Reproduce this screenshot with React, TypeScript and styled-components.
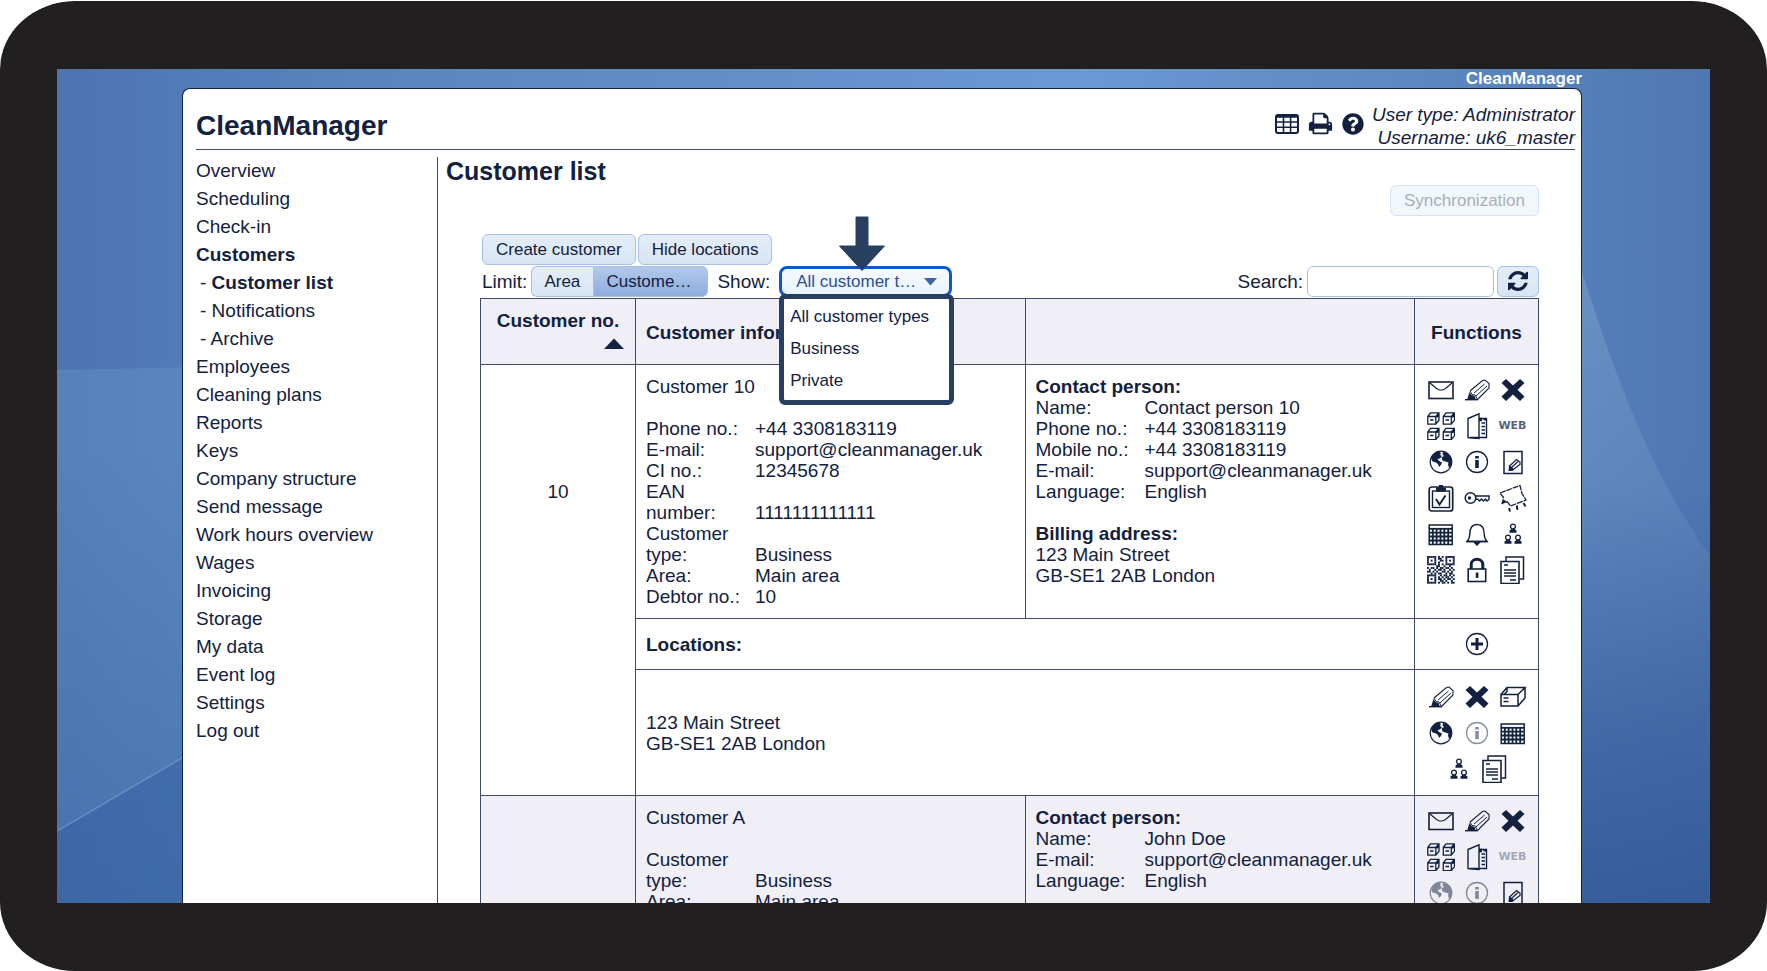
import React from 'react';
import styled, { createGlobalStyle } from 'styled-components';
import { FaQuestionCircle } from 'react-icons/fa';

const ink = '#12213f';
const line = '#3d4a68';
const callout = '#27405f';

const GlobalStyle = createGlobalStyle`
  *, *::before, *::after { box-sizing: border-box; }
  html, body { margin: 0; background: #fff; }
  body, button, input, select {
    font-family: 'Liberation Sans', Arial, Helvetica, sans-serif;
    color: ${ink};
  }
  body { font-size: 19px; line-height: 21px; }
  a { color: inherit; text-decoration: none; }
`;

/* ---------- device and wallpaper ---------- */

const Device = styled.div`
  height: 100vh;
  min-height: 480px;
  padding: 68px 57px;
  background: #221f20;
  background-clip: padding-box;
  border-top: 1px solid #fff;
  border-radius: 75px / 69px;
`;

const Screen = styled.div`
  position: relative;
  height: 100%;
  overflow: hidden;
  padding: 0 128px 0 125px;
  display: flex;
  flex-direction: column;
  background: linear-gradient(90deg, #4b74b1 0%, #5a84be 18%, #6b99d3 62%, #5a84be 86%, #4f78b3 100%);
`;

const Wallpaper = styled.svg`
  position: absolute;
  inset: 0;
  width: 100%;
  height: 100%;
`;

const Brand = styled.div`
  position: relative;
  text-align: right;
  font-size: 17px;
  line-height: 19px;
  font-weight: bold;
  color: #fff;
`;

const Panel = styled.div`
  position: relative;
  flex: 1 0 auto;
  display: flex;
  flex-direction: column;
  background: #fff;
  border: 1px solid ${ink};
  border-bottom: 0;
  border-radius: 8px 8px 0 0;
`;

/* ---------- header ---------- */

const Header = styled.header`
  display: flex;
  align-items: center;
  height: 61px;
  margin: 0 6px 0 13px;
  padding-top: 13px;
  border-bottom: 1px solid ${line};
`;

const AppName = styled.h1`
  margin: 0 auto 0 0;
  font-size: 28px;
  line-height: 32px;
`;

const HeaderTools = styled.div`
  display: flex;
  align-items: center;
  gap: 9px;
  margin-right: 8px;
  padding-bottom: 4px;
`;

const PlainButton = styled.button<{ $muted?: boolean }>`
  display: flex;
  align-items: center;
  justify-content: center;
  padding: 0;
  border: 0;
  background: none;
  cursor: pointer;
  opacity: ${(p) => (p.$muted ? 0.5 : 1)};
`;

const UserInfo = styled.div`
  font-style: italic;
  line-height: 23px;
  text-align: right;
`;

/* ---------- body ---------- */

const Body = styled.div`
  flex: 1;
  display: flex;
  padding-top: 7px;
`;

const Nav = styled.nav`
  flex: 0 0 254px;
  padding-left: 13px;
`;

const NavList = styled.ul`
  list-style: none;
  margin: 0;
  padding: 0;
`;

const NavItem = styled.li<{ $bold?: boolean; $sub?: boolean }>`
  line-height: 28px;
  padding-left: ${(p) => (p.$sub ? 4 : 0)}px;
  a { font-weight: ${(p) => (p.$bold ? 'bold' : 'normal')}; }
`;

const Main = styled.main`
  flex: 1;
  min-width: 0;
  border-left: 1px solid ${line};
  padding: 0 42px;
`;

const PageTitle = styled.h2`
  margin: 0 0 0 -34px;
  font-size: 25px;
  line-height: 28px;
`;

const Button = styled.button`
  height: 31px;
  padding: 0 13px;
  border: 1px solid #a5c0ea;
  border-radius: 6px;
  background: linear-gradient(#e4edf7, #d7e5f3);
  font-size: 17px;
  line-height: 20px;
  &:disabled {
    background: #f2f7fb;
    border-color: #d6e3f6;
    color: #a9afb9;
  }
`;

const SyncRow = styled.div`
  display: flex;
  justify-content: flex-end;
  margin-bottom: 18px;
`;

const ActionRow = styled.div`
  display: flex;
  gap: 2px;
  padding-left: 2px;
  margin-bottom: 1px;
`;

const FilterRow = styled.div`
  display: flex;
  align-items: center;
  padding-left: 2px;
  margin-bottom: 1px;
`;

const Segments = styled.div`
  display: flex;
  margin: 0 9px 0 4px;
`;

const Segment = styled(Button)<{ $active?: boolean }>`
  width: ${(p) => (p.$active ? 115 : 62)}px;
  padding-left: 12px;
  border-radius: ${(p) => (p.$active ? '0 6px 6px 0' : '6px 0 0 6px')};
  border-right-width: ${(p) => (p.$active ? 1 : 0)}px;
  background: ${(p) => (p.$active ? 'linear-gradient(#b3c9ea, #8dacde)' : 'linear-gradient(#e4edf7, #d7e5f3)')};
  text-align: left;
`;

const SelectBox = styled.div`
  position: relative;
  margin-left: 9px;
`;

const TypeSelect = styled.select`
  display: block;
  appearance: none;
  width: 173px;
  height: 31px;
  padding: 0 28px 0 14px;
  border: 3px solid #0c58cc;
  border-radius: 8px;
  background: linear-gradient(#f6faff, #e9f3fc);
  font-size: 17px;
  color: #2b4f91;
  outline: none;
`;

const Caret = styled.svg`
  position: absolute;
  right: 15px;
  top: 12px;
  pointer-events: none;
`;

const Pointer = styled.svg`
  position: absolute;
  left: 59px;
  top: -50px;
  z-index: 3;
`;

const Menu = styled.ul`
  position: absolute;
  left: 0;
  top: 28px;
  z-index: 2;
  width: 175px;
  margin: 0;
  padding: 2px 0 3px;
  list-style: none;
  background: #fff;
  border: 5px solid ${callout};
  border-radius: 6px;
`;

const MenuItem = styled.button`
  display: block;
  width: 100%;
  height: 32px;
  padding: 0 0 0 6px;
  border: 0;
  background: none;
  font-size: 17px;
  line-height: 20px;
  text-align: left;
`;

const SearchBox = styled.form`
  display: flex;
  align-items: center;
  margin-left: auto;
`;

const SearchInput = styled.input`
  width: 187px;
  height: 31px;
  margin: 0 3px 0 4px;
  padding: 0 8px;
  border: 1px solid #a5c0ea;
  border-radius: 6px;
  background: #fff;
  font-size: 17px;
`;

const RefreshButton = styled(Button)`
  width: 42px;
  padding: 0 0 2px;
  display: flex;
  align-items: center;
  justify-content: center;
`;

/* ---------- table ---------- */

const Table = styled.table`
  width: 100%;
  table-layout: fixed;
  border-collapse: collapse;
`;

const Col = styled.col<{ $w?: number }>`
  width: ${(p) => (p.$w ? `${p.$w}px` : 'auto')};
`;

const Th = styled.th<{ $center?: boolean }>`
  height: 66px;
  padding: 2px 10px 0;
  border: 1px solid ${line};
  background: #f0eff6;
  text-align: ${(p) => (p.$center ? 'center' : 'left')};
`;

const SortMark = styled.svg`
  display: block;
  margin: 7px 1px 6px auto;
`;

const Td = styled.td<{ $tint?: boolean; $open?: 'top' | 'bottom'; $middle?: boolean }>`
  padding: 11px 10px;
  border: 1px solid ${line};
  ${(p) => p.$open && `border-${p.$open}-style: hidden;`}
  background: ${(p) => (p.$tint ? '#f0eff6' : '#fff')};
  vertical-align: ${(p) => (p.$middle ? 'middle' : 'top')};
`;

const NumberTd = styled(Td)`
  text-align: center;
`;

const AddressTd = styled(Td)`
  height: 126px;
`;

const IconTd = styled(Td)`
  padding: 7px;
`;

const Icons = styled.div`
  display: flex;
  flex-wrap: wrap;
  justify-content: center;
`;

const IconButton = styled(PlainButton)`
  width: 36px;
  height: 36px;
`;

const WebLabel = styled.span`
  font-family: 'DejaVu Sans', sans-serif;
  font-size: 11px;
  line-height: 14px;
  font-weight: bold;
  color: #56637c;
`;

const Facts = styled.dl`
  display: grid;
  grid-template-columns: 97px 1fr;
  column-gap: 12px;
  align-items: end;
  margin: 0;
  dt, dd { margin: 0; }
`;

const Block = styled.div`
  margin-bottom: 21px;
`;

/* ---------- icons ---------- */

const Cube = ({ x, y }: { x: number; y: number }) => (
  <g transform={`translate(${x} ${y})`}>
    <path d="M.8 4.500h8v7.700h-8zM.8 4.500 3.500.8H12v7.400L8.800 12M8.800 4.500 12 .8M3 8h3.500" />
    <path d="M8.800 4.500 12 .8v4l-2 1z" fill={ink} stroke="none" />
  </g>
);

const Person = ({ x, y }: { x: number; y: number }) => (
  <g transform={`translate(${x} ${y})`}>
    <circle cx="0" cy="3" r="2.4" />
    <path d="M-3.5 9.300V7l2-1.500h3l2 1.500v2.300z" fill={ink} stroke="none" />
  </g>
);

const qrRows = [
  '111110101011111',
  '100010110010001',
  '101010011010101',
  '100010100010001',
  '111110101011111',
  '000001100100100',
  '101101011011010',
  '010010110100101',
  '110101001101010',
  '001010110010110',
  '111110010110101',
  '100010101011010',
  '101010110101101',
  '100010011010010',
  '111110101101011',
];

const glyphs: Record<string, React.ReactNode> = {
  mail: (
    <>
      <rect x="2" y="6" width="24" height="16.5" strokeWidth="1.6" />
      <path d="M3 7l6.500 5.500 3 1.500h3l3-1.500L25 7" strokeWidth="1.2" />
    </>
  ),
  edit: (
    <>
      <path d="M7 15 19.500 4.500 22 4l4 3.500v4.500L14.500 23.500" strokeWidth="1.1" />
      <path d="M11 17 21.500 8M13 20 24 10" strokeWidth="1" />
      <path d="M7 15l2 3.500 3 .5 2.500 4.500" strokeWidth="1" />
      <path d="M6.500 16 4 24h9l-1.500-4-3-1z" fill={ink} stroke="none" />
      <path d="M2 23.700h13" strokeWidth="1.4" />
    </>
  ),
  remove: (
    <path
      d="M7 3l7 6.500L21 3l4.500 4-7 6.700 7 6.800L21 25l-7-6.500L7 25l-4.500-4.500 7-6.800-7-6.700z"
      fill={ink}
      stroke="none"
    />
  ),
  cubes: (
    <>
      <Cube x={0} y={0} />
      <Cube x={15.5} y={0} />
      <Cube x={0} y={15.5} />
      <Cube x={15.5} y={15.5} />
    </>
  ),
  binder: (
    <>
      <path d="M5 6.500 16 1.800V26.500L5 25.500z" strokeWidth="1.4" />
      <path d="M16 6.500h7.500v19H7" strokeWidth="1.4" />
      <path d="M18.500 11H22M18.500 14.500H22M18.500 18H22M18.500 21.500H22" strokeWidth="1.4" />
      <path d="M16 5.800h3v3.500h-3zM20.500 6h3.500v2.500h-3.500z" fill={ink} stroke="none" />
    </>
  ),
  globe: (
    <>
      <circle cx="14" cy="14" r="10.8" strokeWidth="1.2" />
      <path
        d="M4 10c1-3 4-6 8-6.500l2 1.500-1 2 2 1-2 2.500-2.500.5L12 13l3 1.500-1 2.500-2 2-1-3-2-1.500-3.500-1zM16 4c4 0 8 3 9 8l-1 6-2 2-1-3.500.5-2-3-1-3-1-1-3 2.500-1.500-1.500-1.500z"
        fill={ink}
        stroke="none"
      />
    </>
  ),
  info: (
    <>
      <circle cx="14" cy="14" r="10.5" strokeWidth="1.3" />
      <path d="M12.200 8h3.600v2.600h-3.600zM12.200 12h3.600v8h-3.600z" fill={ink} stroke="none" />
    </>
  ),
  note: (
    <>
      <rect x="5" y="3.5" width="18" height="22" strokeWidth="1.5" />
      <path d="M10 18.500l7.500-7 3.500 2.500v2.500L13 22.500M12.500 19.500l6.500-6" strokeWidth="1.2" />
      <path d="M10 17.500 9.500 23h3l2.500-1.500-2-2.500z" fill={ink} stroke="none" />
    </>
  ),
  checklist: (
    <>
      <rect x="2.2" y="3" width="23.500" height="24" rx="2.5" strokeWidth="1.7" />
      <rect x="5.5" y="7" width="17" height="16.500" strokeWidth="1.4" />
      <path d="M9 7.800V3.500h3V1h4v2.500h3v4.300z" fill={ink} stroke="none" />
      <path d="M9 15l3.500 5.500L18.500 11.500" strokeWidth="2" />
    </>
  ),
  key: (
    <>
      <circle cx="7.5" cy="14" r="5.3" strokeWidth="1.5" />
      <circle cx="6.5" cy="14" r="1.7" fill={ink} stroke="none" />
      <path d="M12.500 12H26v3.500l-2 1.500-1.500-2-2 2-2-2-2 2-1.500-1.700h-2.500" strokeWidth="1.4" />
    </>
  ),
  puzzle: (
    <>
      <path d="M1 9 21 1.500l2 8 4 6.500-9 3.500-6.500 2.500-3-4-5 .5 1-5z" strokeWidth="1.3" strokeDasharray="6 .8" />
      <path d="M3 20l2-3 2 1M10 24l1 3.500M18 21.500v3l1 1M24.500 19l2 3.500" strokeWidth="2" />
    </>
  ),
  calendar: (
    <>
      <rect x="2.2" y="5" width="23" height="19.500" strokeWidth="1.5" />
      <path d="M2 8.800h23.500" strokeWidth="1.8" />
      <path
        d="M2 12.600h23M2 16.500h23M2 20.500h23M5.800 9v15M9.600 9v15M13.500 9v15M17.300 9v15M21.200 9v15"
        strokeWidth="1.8"
      />
    </>
  ),
  bell: (
    <>
      <path
        d="M4 21.500c2-2 2.800-3.500 2.800-7.500 0-6 2.200-9.500 7.200-9.500s7.200 3.500 7.200 9.500c0 4 .8 5.500 2.800 7.500z"
        strokeWidth="1.4"
      />
      <path d="M3.500 21.500h21M11.500 22.500l2.500 2.500 2.500-2.500z" fill={ink} strokeWidth="1.4" />
    </>
  ),
  team: (
    <>
      <Person x={14} y={3.5} />
      <Person x={9} y={14.5} />
      <Person x={19} y={14.5} />
    </>
  ),
  qr: (
    <g stroke="none" fill={ink}>
      {qrRows.flatMap((row, y) =>
        row.split('').map((bit, x) =>
          bit === '1' ? <rect key={`${x}-${y}`} x={x * 1.84} y={y * 1.84} width="1.9" height="1.9" /> : null,
        ),
      )}
    </g>
  ),
  lock: (
    <>
      <rect x="5.2" y="13" width="17.500" height="12.500" strokeWidth="1.6" />
      <path d="M8.200 13V8.500c0-7 11.600-7 11.600 0V13" strokeWidth="3" />
      <path d="M12.800 16.500h2.600v5.500h-2.600z" fill={ink} stroke="none" />
    </>
  ),
  copy: (
    <>
      <path d="M7 5.500V1h17.500v22h-4" strokeWidth="1.5" />
      <path d="M2 5.500h18v22H2z" strokeWidth="1.6" />
      <path d="M5 9h4M5 14h12M5 17h12M5 20h12M11 24h6" strokeWidth="1.4" />
    </>
  ),
  add: (
    <>
      <circle cx="14" cy="14" r="10.5" strokeWidth="1.3" />
      <path d="M14 8v12M8 14h12" strokeWidth="3" />
    </>
  ),
  box: (
    <>
      <path d="M2 11.500h17v11.500H2zM2 11.500 8 4.500h18L19 11.500M26 4.500V15l-7 8M8 4.500v4l-3 3" strokeWidth="1.5" />
      <path d="M4.500 15h5M4.500 18.500h5" strokeWidth="1.5" />
    </>
  ),
};

const Glyph = ({ name }: { name: string }) => (
  <svg width="28" height="28" viewBox="0 0 28 28" fill="none" stroke={ink} strokeWidth="1.3" aria-hidden="true">
    {glyphs[name]}
  </svg>
);

const IconSet = ({ names, muted = [] }: { names: string[]; muted?: string[] }) => (
  <Icons>
    {names.map((name) => (
      <IconButton key={name} type="button" aria-label={name} $muted={muted.includes(name)}>
        {name === 'web' ? <WebLabel>WEB</WebLabel> : <Glyph name={name} />}
      </IconButton>
    ))}
  </Icons>
);

const GridIcon = () => (
  <svg width="24" height="20" viewBox="0 0 24 20" fill="none" stroke={ink} aria-hidden="true">
    <rect x="1" y="1" width="22" height="18" rx="2" strokeWidth="2" />
    <path d="M1 2.500h22" strokeWidth="2.500" />
    <path d="M1 8h22M1 13.300h22M8.500 3v16M15.600 3v16" strokeWidth="1.6" />
  </svg>
);

const PrintIcon = () => (
  <svg width="25" height="25" viewBox="0 0 1792 1792" fill={ink} aria-hidden="true">
    <path d="M448 1536h896v-256h-896v256zm0-640h896v-384h-160q-40 0-68-28t-28-68v-160h-640v640zm1152 64q0-26-19-45t-45-19-45 19-19 45 19 45 45 19 45-19 19-45zm128 0v416q0 13-9.500 22.500t-22.500 9.500h-224v160q0 40-28 68t-68 28h-960q-40 0-68-28t-28-68v-160h-224q-13 0-22.500-9.500t-9.500-22.500v-416q0-79 56.500-135.500t135.500-56.500h64v-544q0-40 28-68t68-28h672q40 0 88 20t76 48l152 152q28 28 48 76t20 88v256h64q79 0 135.500 56.500t56.500 135.500z" />
  </svg>
);

const RefreshIcon = () => (
  <svg width="20" height="20" viewBox="0 0 1536 1536" fill={ink} aria-hidden="true">
    <path d="M1511 928q0 5-1 7-64 268-268 434.500t-478 166.500q-146 0-282.500-55t-243.500-157l-129 129q-19 19-45 19t-45-19-19-45v-448q0-26 19-45t45-19h448q26 0 45 19t19 45-19 45l-137 137q71 66 161 102t187 36q134 0 250-65t186-179q11-17 53-117 8-23 30-23h192q13 0 22.500 9.500t9.500 22.500zm25-800v448q0 26-19 45t-45 19h-448q-26 0-45-19t-19-45 19-45l138-138q-148-137-349-137-134 0-250 65t-186 179q-11 17-53 117-8 23-30 23h-199q-13 0-22.500-9.500t-9.500-22.500v-7q65-268 270-434.500t480-166.500q146 0 284 55.500t245 156.500l130-129q19-19 45-19t45 19 19 45z" />
  </svg>
);

/* ---------- data ---------- */

type Fact = [string, string];

const navItems: { label: string; bold?: boolean; sub?: boolean }[] = [
  { label: 'Overview' },
  { label: 'Scheduling' },
  { label: 'Check-in' },
  { label: 'Customers', bold: true },
  { label: 'Customer list', bold: true, sub: true },
  { label: 'Notifications', sub: true },
  { label: 'Archive', sub: true },
  { label: 'Employees' },
  { label: 'Cleaning plans' },
  { label: 'Reports' },
  { label: 'Keys' },
  { label: 'Company structure' },
  { label: 'Send message' },
  { label: 'Work hours overview' },
  { label: 'Wages' },
  { label: 'Invoicing' },
  { label: 'Storage' },
  { label: 'My data' },
  { label: 'Event log' },
  { label: 'Settings' },
  { label: 'Log out' },
];

const FactList = ({ items }: { items: Fact[] }) => (
  <Facts>
    {items.map(([k, v]) => (
      <React.Fragment key={k}>
        <dt>{k}</dt>
        <dd>{v}</dd>
      </React.Fragment>
    ))}
  </Facts>
);

const basicIcons = ['mail', 'edit', 'remove', 'cubes', 'binder', 'web', 'globe', 'info', 'note'];
const extraIcons = ['checklist', 'key', 'puzzle', 'calendar', 'bell', 'team', 'qr', 'lock', 'copy'];

export default function App() {
  return (
    <>
      <GlobalStyle />
      <Device>
        <Screen>
          <Wallpaper viewBox="0 0 1653 834" preserveAspectRatio="none" aria-hidden="true">
            <defs>
              <linearGradient id="shade" x1="0" y1="0" x2="0" y2="1">
                <stop offset="0.45" stopColor="#2c5596" stopOpacity="0" />
                <stop offset="1" stopColor="#2c5596" stopOpacity="0.35" />
              </linearGradient>
              <linearGradient id="deep" x1="0" y1="0" x2="0" y2="1">
                <stop offset="0" stopColor="#2c5290" stopOpacity="0" />
                <stop offset="0.6" stopColor="#2c5290" stopOpacity="0.4" />
                <stop offset="1" stopColor="#2c5290" stopOpacity="0.6" />
              </linearGradient>
              <linearGradient id="glow" x1="0" y1="0" x2="0" y2="1">
                <stop offset="0" stopColor="#a9c4e0" stopOpacity="0.3" />
                <stop offset="0.5" stopColor="#8fb0d4" stopOpacity="0.16" />
                <stop offset="1" stopColor="#8fb0d4" stopOpacity="0" />
              </linearGradient>
            </defs>
            <path d="M0 301 140 298V680L0 762z" fill="#79a6cf" opacity="0.26" />
            <rect width="1653" height="834" fill="url(#shade)" />
            <path d="M0 762 130 686V834H0z" fill="#3464a8" opacity="0.35" />
            <path d="M0 762 130 686" stroke="#7ba3d3" strokeWidth="1.5" opacity="0.6" />
            <path d="M1500 120C1550 290 1590 400 1653 487V834H1500z" fill="url(#glow)" />
            <rect x="1500" y="420" width="153" height="414" fill="url(#deep)" />
          </Wallpaper>

          <Brand>CleanManager</Brand>

          <Panel>
            <Header>
              <AppName>CleanManager</AppName>
              <HeaderTools>
                <PlainButton type="button" aria-label="Table"><GridIcon /></PlainButton>
                <PlainButton type="button" aria-label="Print"><PrintIcon /></PlainButton>
                <PlainButton type="button" aria-label="Help"><FaQuestionCircle size={22} color={ink} /></PlainButton>
              </HeaderTools>
              <UserInfo>
                <div>User type: Administrator</div>
                <div>Username: uk6_master</div>
              </UserInfo>
            </Header>

            <Body>
              <Nav>
                <NavList>
                  {navItems.map(({ label, bold, sub }) => (
                    <NavItem key={label} $bold={bold} $sub={sub}>
                      {sub && '- '}
                      <a href="#">{label}</a>
                    </NavItem>
                  ))}
                </NavList>
              </Nav>

              <Main>
                <PageTitle>Customer list</PageTitle>
                <SyncRow>
                  <Button type="button" disabled>Synchronization</Button>
                </SyncRow>
                <ActionRow>
                  <Button type="button">Create customer</Button>
                  <Button type="button">Hide locations</Button>
                </ActionRow>
                <FilterRow>
                  <span>Limit:</span>
                  <Segments>
                    <Segment type="button">Area</Segment>
                    <Segment type="button" $active>Custome…</Segment>
                  </Segments>
                  <label htmlFor="type">Show:</label>
                  <SelectBox>
                    <TypeSelect id="type" defaultValue="all">
                      <option value="all">All customer t…</option>
                      <option value="business">Business</option>
                      <option value="private">Private</option>
                    </TypeSelect>
                    <Caret width="13" height="8" viewBox="0 0 13 8" aria-hidden="true">
                      <path d="M0 0h13L6.500 7.500z" fill="#3a63a8" />
                    </Caret>
                    <Menu>
                      <li><MenuItem type="button">All customer types</MenuItem></li>
                      <li><MenuItem type="button">Business</MenuItem></li>
                      <li><MenuItem type="button">Private</MenuItem></li>
                    </Menu>
                    <Pointer width="48" height="56" viewBox="0 0 48 56" aria-hidden="true">
                      <path
                        d="M18 1h12v29h16.500L24 54.500 1.500 30H18z"
                        fill={callout}
                        stroke={callout}
                        strokeWidth="1"
                        strokeLinejoin="round"
                      />
                    </Pointer>
                  </SelectBox>
                  <SearchBox>
                    <label htmlFor="search">Search:</label>
                    <SearchInput id="search" type="text" />
                    <RefreshButton type="button" aria-label="Refresh"><RefreshIcon /></RefreshButton>
                  </SearchBox>
                </FilterRow>

                <Table>
                  <colgroup>
                    <Col $w={155} />
                    <Col />
                    <Col />
                    <Col $w={124} />
                  </colgroup>
                  <thead>
                    <tr>
                      <Th $center>
                        Customer no.
                        <SortMark width="20" height="11" viewBox="0 0 20 11" aria-hidden="true">
                          <path d="M0 11 10 .5 20 11z" fill={ink} />
                        </SortMark>
                      </Th>
                      <Th>Customer information</Th>
                      <Th />
                      <Th $center>Functions</Th>
                    </tr>
                  </thead>
                  <tbody>
                    <tr>
                      <NumberTd $middle $open="bottom">10</NumberTd>
                      <Td>
                        <Block>Customer 10</Block>
                        <FactList
                          items={[
                            ['Phone no.:', '+44 3308183119'],
                            ['E-mail:', 'support@cleanmanager.uk'],
                            ['CI no.:', '12345678'],
                            ['EAN number:', '1111111111111'],
                            ['Customer type:', 'Business'],
                            ['Area:', 'Main area'],
                            ['Debtor no.:', '10'],
                          ]}
                        />
                      </Td>
                      <Td>
                        <Block>
                          <b>Contact person:</b>
                          <FactList
                            items={[
                              ['Name:', 'Contact person 10'],
                              ['Phone no.:', '+44 3308183119'],
                              ['Mobile no.:', '+44 3308183119'],
                              ['E-mail:', 'support@cleanmanager.uk'],
                              ['Language:', 'English'],
                            ]}
                          />
                        </Block>
                        <b>Billing address:</b>
                        <div>123 Main Street</div>
                        <div>GB-SE1 2AB London</div>
                      </Td>
                      <IconTd><IconSet names={[...basicIcons, ...extraIcons]} /></IconTd>
                    </tr>
                    <tr>
                      <NumberTd rowSpan={2} $open="top" />
                      <Td colSpan={2} $middle><b>Locations:</b></Td>
                      <IconTd $middle><IconSet names={['add']} /></IconTd>
                    </tr>
                    <tr>
                      <AddressTd colSpan={2} $middle>
                        <div>123 Main Street</div>
                        <div>GB-SE1 2AB London</div>
                      </AddressTd>
                      <IconTd $middle>
                        <IconSet
                          names={['edit', 'remove', 'box', 'globe', 'info', 'calendar', 'team', 'copy']}
                          muted={['info']}
                        />
                      </IconTd>
                    </tr>
                    <tr>
                      <NumberTd $tint $middle />
                      <Td $tint>
                        <Block>Customer A</Block>
                        <FactList
                          items={[
                            ['Customer type:', 'Business'],
                            ['Area:', 'Main area'],
                          ]}
                        />
                      </Td>
                      <Td $tint>
                        <b>Contact person:</b>
                        <FactList
                          items={[
                            ['Name:', 'John Doe'],
                            ['E-mail:', 'support@cleanmanager.uk'],
                            ['Language:', 'English'],
                          ]}
                        />
                      </Td>
                      <IconTd $tint>
                        <IconSet names={basicIcons} muted={['web', 'globe', 'info']} />
                      </IconTd>
                    </tr>
                  </tbody>
                </Table>
              </Main>
            </Body>
          </Panel>
        </Screen>
      </Device>
    </>
  );
}
